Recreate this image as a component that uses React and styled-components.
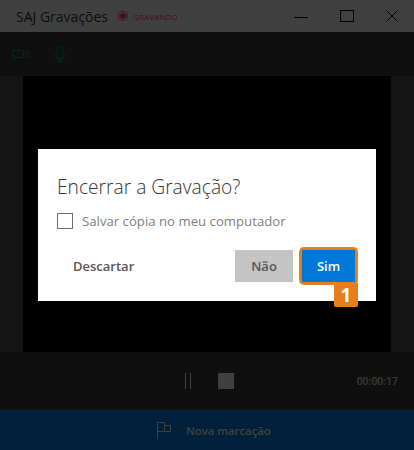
import styled, { createGlobalStyle } from 'styled-components';

const GlobalStyle = createGlobalStyle`
  html, body {
    margin: 0;
    padding: 0;
    background: #000;
  }
  * {
    box-sizing: border-box;
  }
`;

const Page = styled.div`
  position: relative;
  width: 414px;
  height: 450px;
  overflow: hidden;
  display: flex;
  flex-direction: column;
  font-family: "Open Sans", "Noto Sans", sans-serif;
`;

const TitleBar = styled.header`
  height: 32px;
  flex-shrink: 0;
  display: flex;
  align-items: center;
  padding-left: 16px;
  background: #fff;
`;

const AppName = styled.span`
  font-size: 14px;
  color: #333;
  margin-right: 12px;
`;

const RecDot = styled.span`
  width: 6px;
  height: 6px;
  border-radius: 50%;
  background: #ff4060;
  box-shadow: 0 0 0 1px #fff, 0 0 0 2px #ff4060;
  margin: 0 7px 0 0;
`;

const RecLabel = styled.span`
  font-size: 8px;
  letter-spacing: 0.1px;
  color: #ff4060;
`;

const WindowButtons = styled.div`
  margin-left: auto;
  display: flex;
  align-items: center;
  margin-right: 16px;
  gap: 32px;
`;

const MinimizeIcon = styled.span`
  width: 14px;
  height: 1px;
  background: #000;
  margin-top: 2px;
`;

const MaximizeIcon = styled.span`
  width: 14px;
  height: 12px;
  border: 1px solid #000;
`;

const Toolbar = styled.div`
  height: 44px;
  flex-shrink: 0;
  display: flex;
  align-items: center;
  gap: 27px;
  padding-left: 12px;
  background: #3c3c3c;
`;

const VideoArea = styled.div`
  height: 276px;
  flex-shrink: 0;
  padding: 0 23px;
  background: #505050;
`;

const VideoFrame = styled.div`
  height: 100%;
  background: #000;
`;

const Controls = styled.div`
  height: 58px;
  flex-shrink: 0;
  display: flex;
  align-items: center;
  padding: 0 16px 0 185px;
  background: #3c3c3c;
  color: #fff;
`;

const ControlButtons = styled.div`
  display: flex;
  align-items: center;
  gap: 27px;
`;

const PauseIcon = styled.span`
  width: 6px;
  height: 16px;
  border-left: 1px solid #fff;
  border-right: 1px solid #fff;
`;

const StopIcon = styled.span`
  width: 16px;
  height: 16px;
  background: #fff;
`;

const Timer = styled.span`
  margin-left: auto;
  font-size: 10.4px;
  font-weight: 600;
  color: #e0e0e0;
`;

const MarkBar = styled.div`
  height: 40px;
  flex-shrink: 0;
  display: flex;
  align-items: center;
  gap: 15px;
  padding-left: 157px;
  background: #007ce8;
  color: #fff;
`;

const MarkLabel = styled.span`
  font-size: 11.3px;
  font-weight: 600;
`;

const Backdrop = styled.div`
  position: absolute;
  inset: 0;
  background: rgba(0, 0, 0, 0.75);
`;

const Dialog = styled.div`
  position: absolute;
  left: 38px;
  top: 149px;
  width: 338px;
  height: 152px;
  background: #fff;
  display: flex;
  flex-direction: column;
  padding: 25px 21px 0 19px;
`;

const DialogTitle = styled.h2`
  margin: 0;
  font-size: 19.2px;
  line-height: 26px;
  font-weight: 300;
  color: #333;
`;

const CheckRow = styled.label`
  display: flex;
  align-items: center;
  gap: 9px;
  margin-top: 13px;
  font-size: 13.2px;
  line-height: 16px;
  color: #808080;
`;

const CheckBox = styled.span`
  width: 16px;
  height: 16px;
  border: 1px solid #6e6e6e;
`;

const Actions = styled.div`
  display: flex;
  align-items: center;
  margin-top: 21px;
`;

const DiscardButton = styled.span`
  margin-left: 16px;
  font-size: 13px;
  font-weight: 600;
  color: #555;
`;

const Button = styled.span`
  width: ${({ $width }) => $width}px;
  height: 32px;
  display: flex;
  align-items: center;
  justify-content: center;
  font-size: 13px;
  font-weight: 600;
  color: ${({ $primary }) => ($primary ? '#fff' : '#555')};
  background: ${({ $primary }) => ($primary ? '#0078d7' : '#c4c4c4')};
`;

const NoButton = styled(Button)`
  margin-left: auto;
`;

const Highlight = styled.div`
  position: relative;
  margin-left: 9px;
  border-radius: 2px;
  box-shadow: 0 0 0 3px #e67e1e;
`;

const StepBadge = styled.span`
  position: absolute;
  right: -3px;
  top: 33px;
  width: 24px;
  height: 24px;
  display: flex;
  align-items: center;
  justify-content: center;
  border-radius: 0 0 2px 2px;
  background: #e67e1e;
  color: #fff;
  font-size: 19px;
  font-weight: 700;
`;

const CloseIcon = () => (
  <svg width="12" height="12" viewBox="0 0 12 12" fill="none" stroke="#000" strokeWidth="1">
    <path d="M0.5 0.5 11.5 11.5M11.5 0.5 0.5 11.5" />
  </svg>
);

const CameraIcon = () => (
  <svg width="16" height="10" viewBox="0 0 16 10" fill="none" stroke="#00b050" strokeWidth="1">
    <rect x="0.5" y="1.5" width="11" height="7" />
    <path d="M11.5 4 15.5 1.5V8.5L11.5 6" />
  </svg>
);

const MicIcon = () => (
  <svg width="10" height="16" viewBox="0 0 10 16" fill="none" stroke="#00b050" strokeWidth="1">
    <rect x="2" y="0.5" width="6" height="11" rx="1" />
    <path d="M0.5 8V10.5Q0.5 13.5 3.5 13.5H6.5Q9.5 13.5 9.5 10.5V8M5 13.5V15.5M2.5 15.5H7.5" />
  </svg>
);

const FlagIcon = () => (
  <svg width="14" height="17" viewBox="0 0 14 17" fill="none" stroke="#fff" strokeWidth="1">
    <path d="M0.5 0V17M0.5 0.5H7.5V9.5H0.5M7.5 3.5H13.5V9.5H7.5" />
  </svg>
);

export default function App() {
  return (
    <>
      <GlobalStyle />
      <Page>
        <TitleBar>
          <AppName>SAJ Gravações</AppName>
          <RecDot />
          <RecLabel>GRAVANDO</RecLabel>
          <WindowButtons>
            <MinimizeIcon />
            <MaximizeIcon />
            <CloseIcon />
          </WindowButtons>
        </TitleBar>
        <Toolbar>
          <CameraIcon />
          <MicIcon />
        </Toolbar>
        <VideoArea>
          <VideoFrame />
        </VideoArea>
        <Controls>
          <ControlButtons>
            <PauseIcon />
            <StopIcon />
          </ControlButtons>
          <Timer>00:00:17</Timer>
        </Controls>
        <MarkBar>
          <FlagIcon />
          <MarkLabel>Nova marcação</MarkLabel>
        </MarkBar>
        <Backdrop />
        <Dialog>
          <DialogTitle>Encerrar a Gravação?</DialogTitle>
          <CheckRow>
            <CheckBox />
            Salvar cópia no meu computador
          </CheckRow>
          <Actions>
            <DiscardButton>Descartar</DiscardButton>
            <NoButton $width={58}>Não</NoButton>
            <Highlight>
              <Button $primary $width={53}>Sim</Button>
              <StepBadge>1</StepBadge>
            </Highlight>
          </Actions>
        </Dialog>
      </Page>
    </>
  );
}
